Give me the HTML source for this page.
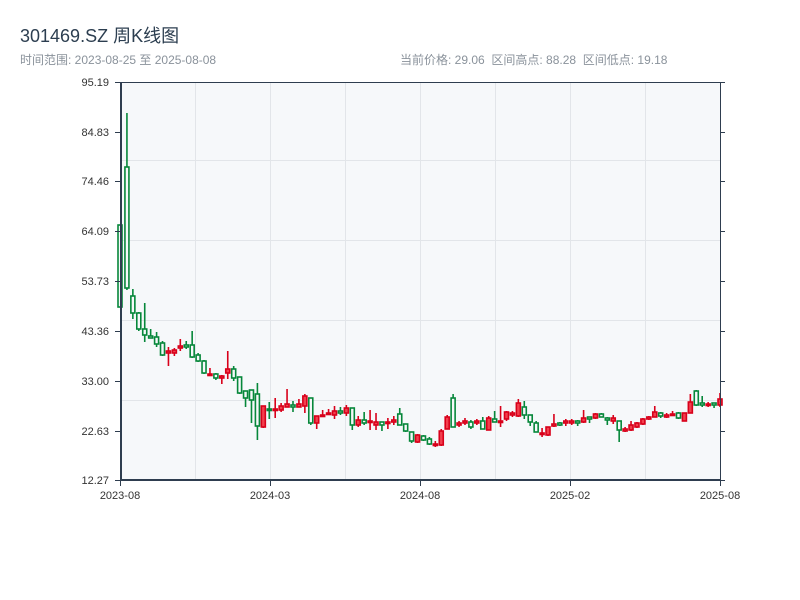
<!DOCTYPE html>
<html><head><meta charset="utf-8">
<style>
body{margin:0;background:#fff;width:800px;height:600px;overflow:hidden;font-family:"Liberation Sans","Noto Sans CJK SC",sans-serif;}
.t{position:absolute;left:20px;top:22px;font-size:18px;color:#2c3e50;}
.s{position:absolute;top:51px;font-size:12px;color:#8a929b;}
svg{position:absolute;left:0;top:0}
</style></head><body>
<div class="t">301469.SZ 周K线图</div>
<div class="s" style="left:20px">时间范围: 2023-08-25 至 2025-08-08</div>
<div class="s" style="left:400px">当前价格: 29.06&nbsp; 区间高点: 88.28&nbsp; 区间低点: 19.18</div>
<svg id="c" width="800" height="600" font-family="Liberation Sans, sans-serif" font-size="11" fill="#333">
<rect x="121" y="82" width="599" height="398" fill="#f6f8fa"/>
<g stroke="#e2e5e9" stroke-width="1">
<line x1="195.5" y1="82" x2="195.5" y2="480"/><line x1="270.5" y1="82" x2="270.5" y2="480"/>
<line x1="345.5" y1="82" x2="345.5" y2="480"/><line x1="420.5" y1="82" x2="420.5" y2="480"/>
<line x1="495.5" y1="82" x2="495.5" y2="480"/><line x1="570.5" y1="82" x2="570.5" y2="480"/>
<line x1="645.5" y1="82" x2="645.5" y2="480"/>
<line x1="121" y1="160.5" x2="720" y2="160.5"/><line x1="121" y1="240.5" x2="720" y2="240.5"/>
<line x1="121" y1="320.5" x2="720" y2="320.5"/><line x1="121" y1="400.5" x2="720" y2="400.5"/>
</g>
<g id="k"></g>
<g stroke="#2e3d4f">
<line x1="121" y1="82" x2="121" y2="481" stroke-width="2"/>
<line x1="120" y1="480" x2="721" y2="480" stroke-width="2"/>
<line x1="121" y1="82.5" x2="720" y2="82.5" stroke-width="1"/>
<line x1="720.5" y1="82" x2="720.5" y2="480" stroke-width="1"/>
</g>
<g stroke="#2e3d4f" id="ticks"></g>
<g text-anchor="end">
<text x="109" y="86">95.19</text><text x="109" y="136">84.83</text><text x="109" y="185">74.46</text>
<text x="109" y="235">64.09</text><text x="109" y="285">53.73</text><text x="109" y="335">43.36</text>
<text x="109" y="385">33.00</text><text x="109" y="435">22.63</text><text x="109" y="484">12.27</text>
</g>
<g text-anchor="middle">
<text x="120" y="499">2023-08</text><text x="270" y="499">2024-03</text><text x="420" y="499">2024-08</text>
<text x="570" y="499">2025-02</text><text x="720" y="499">2025-08</text>
</g>
</svg>
<script>
var d=[[225,307,225,307,'g'],[167,288,113,290,'g'],[296,313,289,319,'g'],[313,329,312,331,'g'],[329,335,303,342,'g'],[336,338,329,338,'g'],[337,344,332,347,'g'],[343,355,341,356,'g'],[351,353,347,366,'r'],[350,353,348,356,'r'],[346,348,339,351,'r'],[345,347,341,349,'g'],[345,357,331,358,'g'],[355,361,353,362,'g'],[361,373,360,374,'g'],[374,375,368,375,'r'],[374,378,373,380,'g'],[376,378,375,384,'r'],[369,373,351,379,'r'],[369,378,366,381,'g'],[377,393,377,394,'g'],[391,398,391,407,'g'],[390,400,390,423,'g'],[394,426,383,440,'g'],[406,427,406,428,'r'],[409,410,402,419,'g'],[409,410,398,418,'r'],[406,410,403,412,'r'],[404,407,389,407,'r'],[405,407,401,412,'g'],[404,407,399,407,'r'],[396,406,394,413,'r'],[398,423,398,425,'g'],[416,423,416,429,'r'],[415,416,410,417,'r'],[413,414,409,415,'r'],[411,415,406,419,'r'],[411,413,407,415,'g'],[408,413,405,416,'r'],[408,425,408,430,'g'],[420,425,416,427,'r'],[420,423,412,425,'g'],[421,422,410,430,'r'],[422,425,413,430,'r'],[422,425,422,431,'g'],[422,423,418,429,'r'],[420,422,416,425,'r'],[414,425,408,425,'g'],[424,431,424,432,'g'],[432,441,432,443,'g'],[435,442,434,443,'r'],[436,440,435,441,'g'],[439,444,437,445,'g'],[444,445,441,447,'r'],[431,445,429,446,'r'],[417,429,415,429,'r'],[398,427,394,427,'g'],[423,425,421,427,'r'],[421,423,418,425,'r'],[422,427,420,429,'g'],[421,423,419,425,'r'],[421,429,417,429,'g'],[418,430,416,430,'r'],[419,422,411,422,'g'],[421,422,406,427,'r'],[412,419,411,421,'r'],[413,415,411,417,'r'],[403,416,399,417,'r'],[407,415,401,419,'g'],[415,422,415,426,'g'],[423,432,421,432,'g'],[433,434,428,437,'r'],[427,435,427,436,'r'],[424,426,414,427,'r'],[423,425,422,426,'g'],[421,423,419,426,'r'],[421,423,419,425,'r'],[421,423,420,426,'g'],[418,422,410,423,'r'],[417,419,417,423,'g'],[414,418,413,419,'r'],[414,417,413,417,'g'],[418,420,417,425,'g'],[418,421,415,424,'r'],[421,430,421,442,'g'],[429,431,427,432,'r'],[425,430,421,431,'r'],[423,427,422,428,'r'],[419,424,418,425,'r'],[417,419,416,420,'r'],[412,417,406,417,'r'],[413,416,412,418,'g'],[415,417,413,418,'r'],[414,415,411,416,'r'],[413,418,412,419,'g'],[413,421,413,421,'r'],[402,413,394,413,'r'],[391,405,390,406,'g'],[403,405,396,407,'g'],[404,405,402,407,'r'],[403,405,403,408,'g'],[399,405,393,407,'r']];
var s='',t='',sp=599/(d.length-1);
for(var i=0;i<d.length;i++){var c=d[i],x=121+i*sp;if(i==0)x=120;
var st=c[4]=='g'?'#06873a':'#d8001a',f=c[4]=='g'?'#f6f8fa':'#f2404e';
s+='<line x1="'+x+'" x2="'+x+'" y1="'+c[2]+'" y2="'+c[3]+'" stroke="'+st+'" stroke-width="1.6"/>';
var h=Math.max(c[1]-c[0],1.5);
s+='<rect x="'+(x-2)+'" y="'+c[0]+'" width="4" height="'+h+'" fill="'+f+'" stroke="'+st+'" stroke-width="1.6"/>';}
document.getElementById('k').innerHTML=s;
var ys=[82,132,181,231,281,331,381,431,480];
for(var j=0;j<ys.length;j++){var y=ys[j]+0.5;t+='<line x1="115" x2="121" y1="'+y+'" y2="'+y+'"/><line x1="720" x2="725" y1="'+y+'" y2="'+y+'"/>';}
[120.5,270.5,420.5,570.5,720.5].forEach(function(x){t+='<line x1="'+x+'" x2="'+x+'" y1="480" y2="486"/>';});
document.getElementById('ticks').innerHTML=t;
</script>
</body></html>
